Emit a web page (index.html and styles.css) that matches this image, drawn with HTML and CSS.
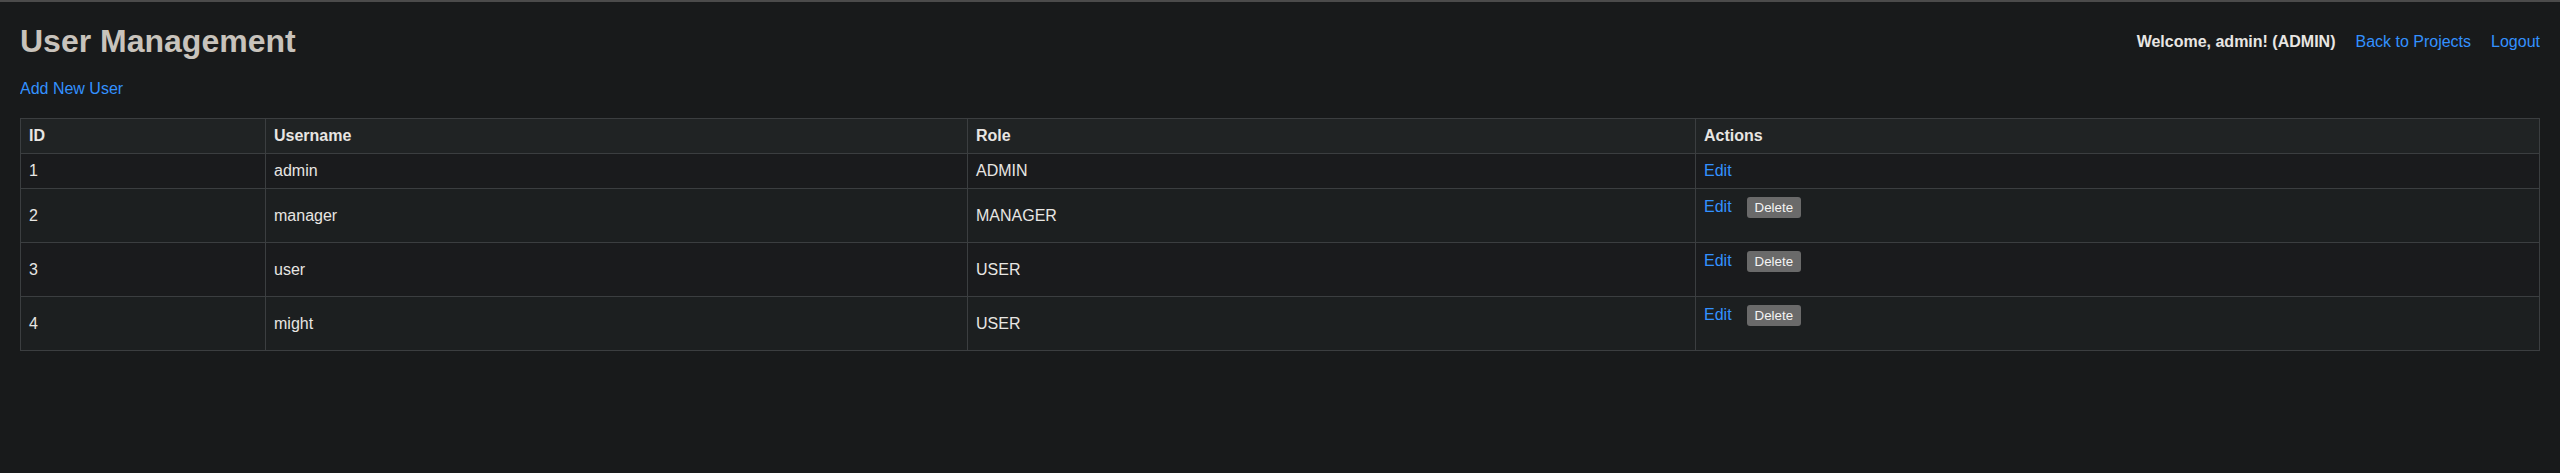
FILE: index.html
```html
<!DOCTYPE html>
<html lang="en">
<head>
<meta charset="utf-8">
<title>User Management</title>
<link rel="stylesheet" href="styles.css">
</head>
<body>
<header class="page-header">
  <h1 class="title">User Management</h1>
  <nav class="user-nav">
    <span class="welcome">Welcome, admin! (ADMIN)</span>
    <a class="link" href="#">Back to Projects</a>
    <a class="link" href="#">Logout</a>
  </nav>
</header>
<div class="actions-bar"><a class="link" href="#">Add New User</a></div>
<table class="users">
  <colgroup>
    <col class="c-id">
    <col class="c-name">
    <col class="c-role">
    <col class="c-actions">
  </colgroup>
  <thead>
    <tr><th>ID</th><th>Username</th><th>Role</th><th>Actions</th></tr>
  </thead>
  <tbody>
    <tr><td>1</td><td>admin</td><td>ADMIN</td><td><a class="link" href="#">Edit</a></td></tr>
    <tr><td>2</td><td>manager</td><td>MANAGER</td><td><a class="link" href="#">Edit</a><form class="delete-form"><button class="btn-delete" type="button">Delete</button></form></td></tr>
    <tr><td>3</td><td>user</td><td>USER</td><td><a class="link" href="#">Edit</a><form class="delete-form"><button class="btn-delete" type="button">Delete</button></form></td></tr>
    <tr><td>4</td><td>might</td><td>USER</td><td><a class="link" href="#">Edit</a><form class="delete-form"><button class="btn-delete" type="button">Delete</button></form></td></tr>
  </tbody>
</table>
</body>
</html>
```
FILE: styles.css
```css
html {
  background: #181a1b;
  border-top: 2px solid #4b4b4b;
}
body {
  margin: 21px 20px 20px;
  font-family: "Liberation Sans", Arial, sans-serif;
  font-size: 16px;
  color: #e8e6e3;
  background: #181a1b;
}
.page-header {
  display: flex;
  justify-content: space-between;
  align-items: center;
  margin-bottom: 20px;
}
.title {
  margin: 0;
  font-size: 32px;
  font-weight: bold;
  color: #c8c3bc;
}
.user-nav {
  display: flex;
  align-items: center;
  gap: 20px;
}
.welcome {
  font-weight: bold;
}
.link {
  color: #3391ff;
  text-decoration: none;
}
.actions-bar {
  margin-bottom: 20px;
}
.users {
  width: 100%;
  border-collapse: collapse;
  table-layout: fixed;
}
.c-id { width: 245px; }
.c-name { width: 702px; }
.c-role { width: 728px; }
.c-actions { width: auto; }
.users th,
.users td {
  border: 1px solid #3b3e40;
  padding: 8px;
  text-align: left;
}
.users th {
  background: #202324;
  font-weight: bold;
}
.users tbody tr:nth-child(odd) td {
  background: #1a1b1d;
}
.users tbody tr:nth-child(even) td {
  background: #1c1f20;
}
.delete-form {
  display: inline-block;
  margin: 0 0 16px 15px;
}
.btn-delete {
  font-family: "Liberation Sans", Arial, sans-serif;
  font-size: 13.333px;
  color: #f4f4f4;
  background: #6a6a6a;
  border: none;
  border-radius: 3px;
  padding: 3px 8px;
  line-height: 15px;
}
```
